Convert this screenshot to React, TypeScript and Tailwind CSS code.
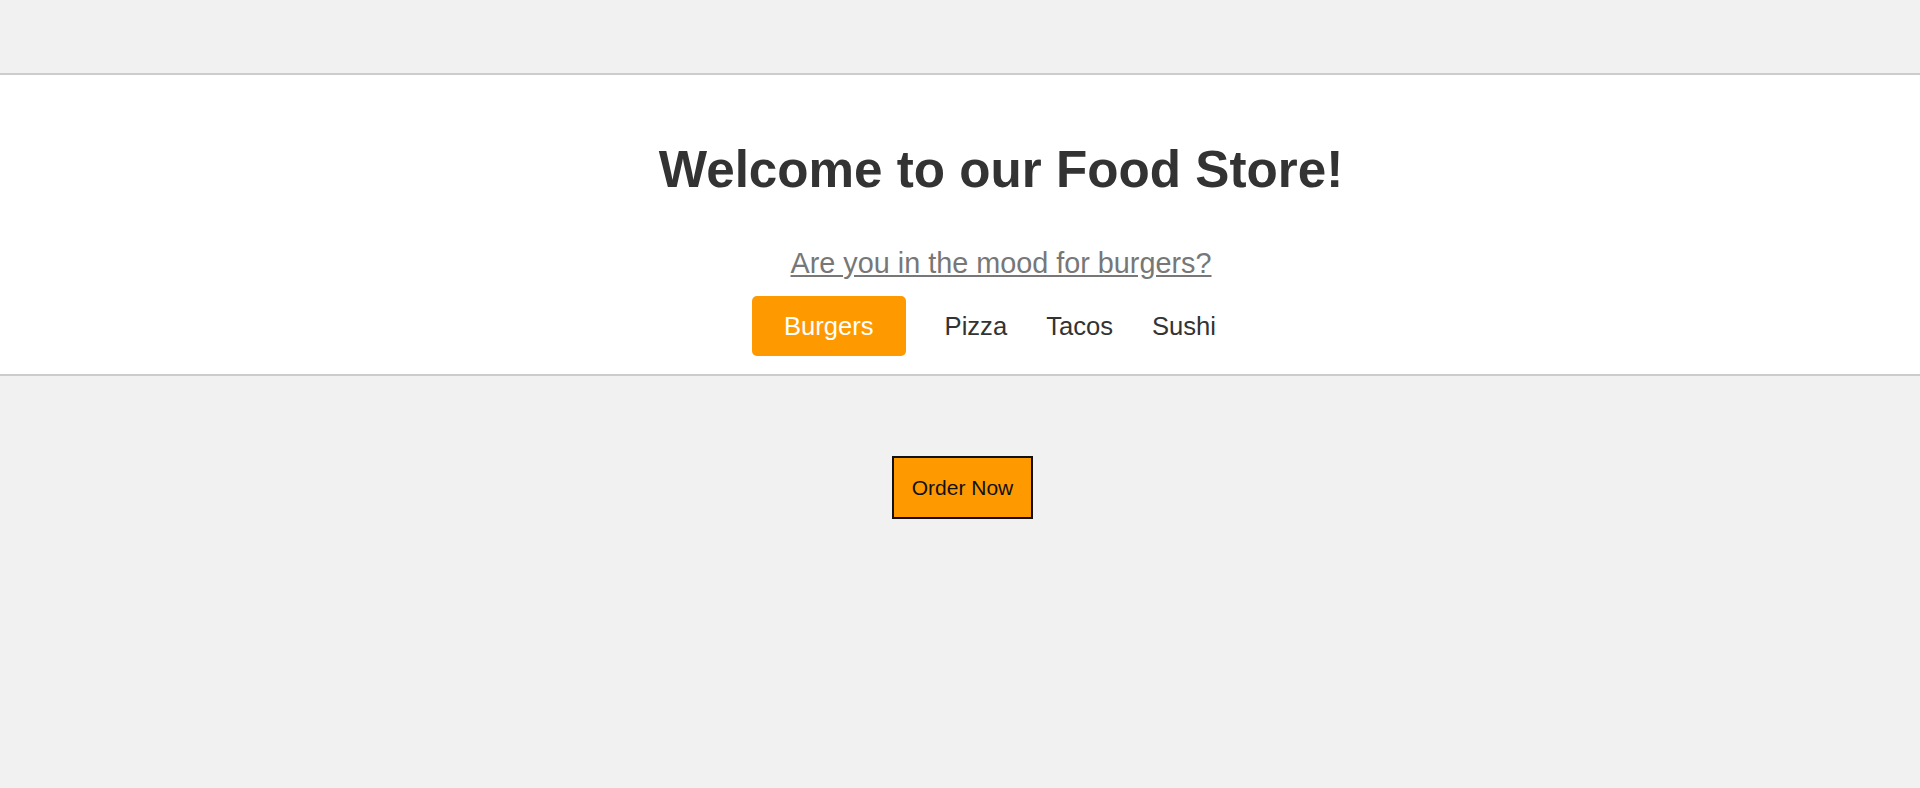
import React from "react";

export default function App() {
  return (
    <div className="min-h-[788px] bg-[#f1f1f1] font-['Liberation_Sans',Arial,sans-serif]">
      <div className="h-[73px]" />
      <header className="bg-white border-y-2 border-[#cccccc] pt-[65px] pb-[18px]">
        <h1 className="pl-[82px] text-center text-[51.2px] leading-[60px] font-bold text-[#333333]">
          Welcome to our Food Store!
        </h1>
        <p className="mt-[46.5px] pl-[82px] text-center text-[28.8px] leading-[33px] text-[#777777] underline">
          Are you in the mood for burgers?
        </p>
        <nav className="mt-[16.5px] flex justify-center pl-[48px] text-[25.6px] leading-[30px]">
          <span className="rounded-[5px] bg-[#ff9900] px-8 py-[15px] text-white">Burgers</span>
          <span className="ml-[39px] py-[15px] text-[#333333]">Pizza</span>
          <span className="ml-[39px] py-[15px] text-[#333333]">Tacos</span>
          <span className="ml-[39px] py-[15px] text-[#333333]">Sushi</span>
        </nav>
      </header>
      <div className="flex justify-center pl-[5px] pt-[80px]">
        <button className="border-2 border-[#111111] bg-[#ff9900] px-[18px] py-[17px] text-[21px] leading-[25px] text-[#111111]">
          Order Now
        </button>
      </div>
    </div>
  );
}
